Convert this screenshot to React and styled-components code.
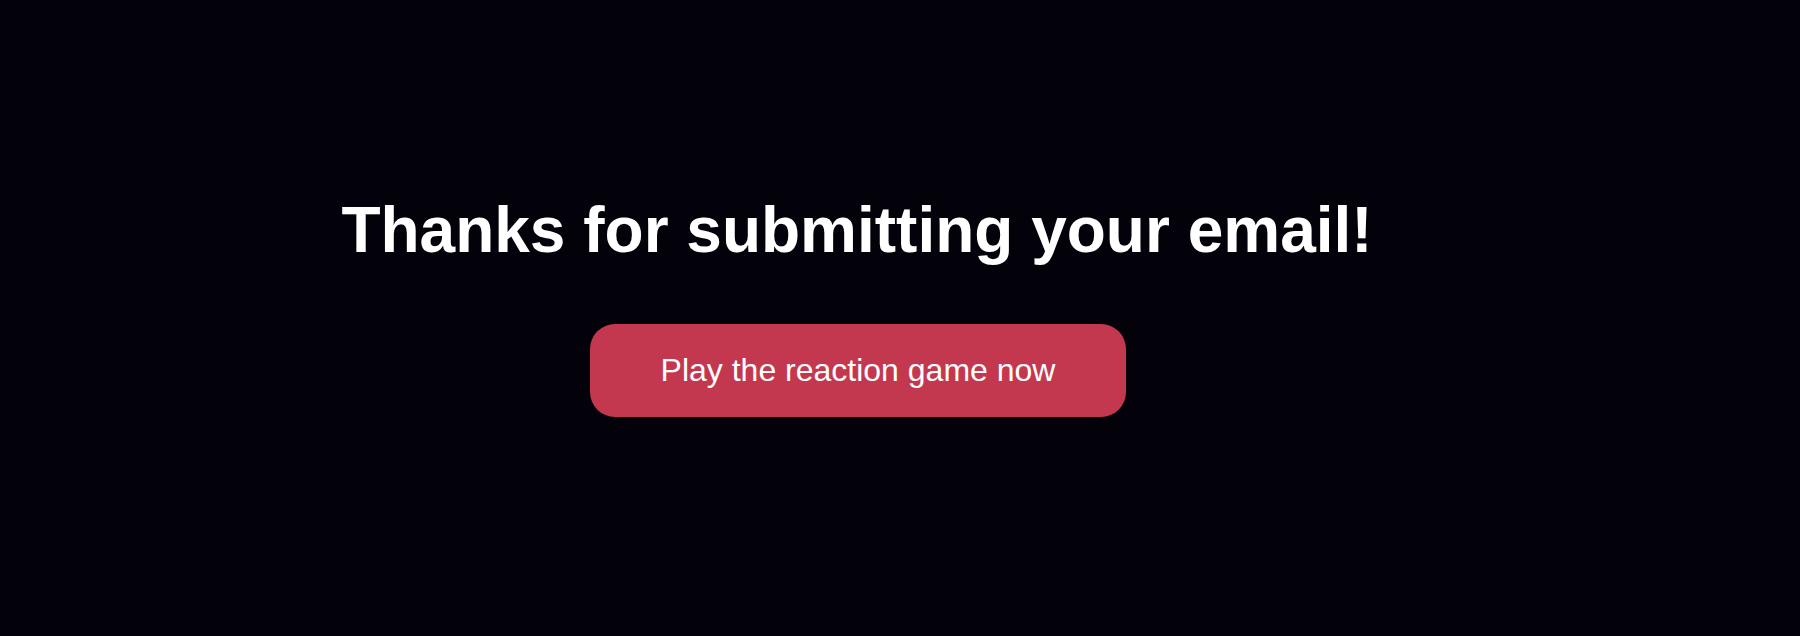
import React from 'react';
import styled, { createGlobalStyle } from 'styled-components';

const GlobalStyle = createGlobalStyle`
  html, body {
    margin: 0;
    padding: 0;
    background: #03020a;
  }
  body {
    font-family: "Liberation Sans", Arial, sans-serif;
  }
`;

const Page = styled.main`
  min-height: 636px;
  box-sizing: border-box;
  display: flex;
  flex-direction: column;
  align-items: center;
  padding: 194px 86px 0 0;
  gap: 58px;
  background: #03020a;
`;

const Heading = styled.h1`
  margin: 0;
  color: #ffffff;
  font-size: 64px;
  font-weight: 700;
  line-height: 72px;
  white-space: nowrap;
`;

const PlayButton = styled.button`
  width: 536px;
  height: 93px;
  margin-left: 2px;
  border: none;
  border-radius: 25px;
  background: #c4384f;
  color: #ffffff;
  font-family: "Liberation Sans", Arial, sans-serif;
  font-size: 32px;
  cursor: pointer;
`;

const App = () => (
  <>
    <GlobalStyle />
    <Page>
      <Heading>Thanks for submitting your email!</Heading>
      <PlayButton type="button">Play the reaction game now</PlayButton>
    </Page>
  </>
);

export default App;
